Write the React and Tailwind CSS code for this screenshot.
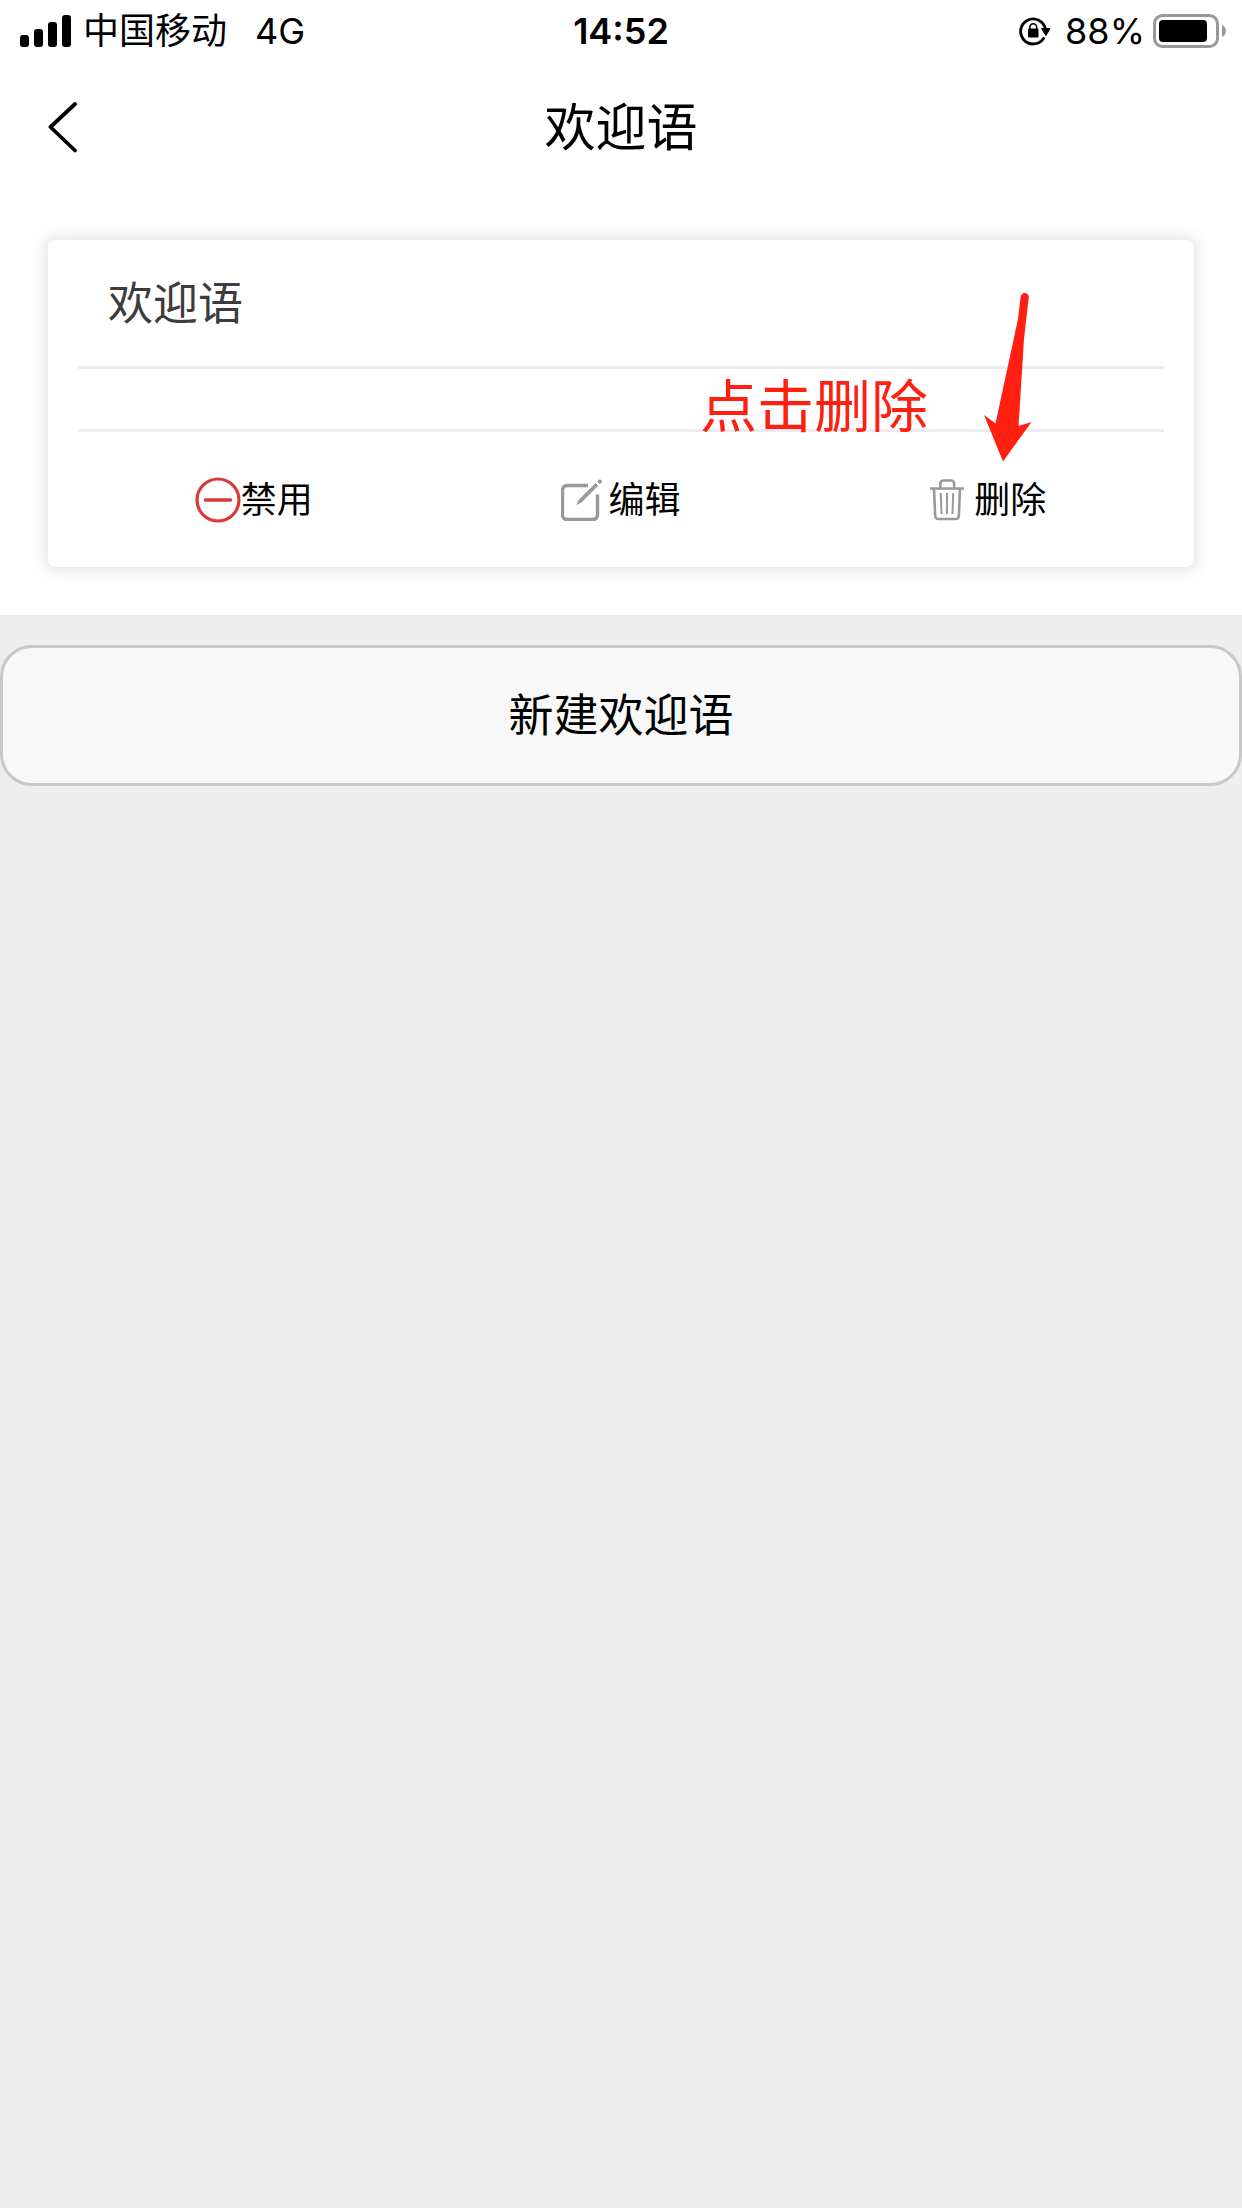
import React from "react";

const actions = [
  { id: "disable", label: "禁用", icon: <DisableIcon />, gap: "gap-0" },
  { id: "edit", label: "编辑", icon: <EditIcon />, gap: "gap-1.5" },
  { id: "delete", label: "删除", icon: <TrashIcon />, gap: "gap-2.5" },
];

function SignalIcon() {
  return (
    <svg width="51" height="32" viewBox="0 0 51 32" aria-hidden="true">
      <rect x="0" y="20" width="9" height="12" rx="3" />
      <rect x="14" y="14" width="9" height="18" rx="3" />
      <rect x="28" y="7" width="9" height="25" rx="3" />
      <rect x="42" y="0" width="9" height="32" rx="3" />
    </svg>
  );
}

function RotationLockIcon() {
  return (
    <svg width="32" height="30" viewBox="0 0 32 30" fill="none" aria-hidden="true">
      <path
        d="M26.400 13A12.500 12.500 0 1 0 24.500 22.500"
        stroke="#000"
        strokeWidth="2.800"
        strokeLinecap="round"
      />
      <path d="M22.500 12.500h8.500l-4 7z" fill="#000" stroke="#000" strokeLinejoin="round" />
      <rect x="9" y="12.500" width="10.500" height="9" rx="1.200" fill="#000" />
      <path d="M10.800 13v-1.800a3.450 3.450 0 0 1 6.900 0V13" stroke="#000" strokeWidth="1.600" />
    </svg>
  );
}

function BatteryIcon() {
  return (
    <svg width="73" height="34" viewBox="0 0 73 34" fill="none" aria-hidden="true">
      <rect x="1.500" y="1.500" width="63" height="31" rx="8" stroke="#999" strokeWidth="3" />
      <rect x="6" y="6" width="48" height="22" rx="4" fill="#000" />
      <path d="M69 11c5.200 1.800 5.200 10.200 0 12z" fill="#999" />
    </svg>
  );
}

function BackIcon() {
  return (
    <svg width="30" height="52" viewBox="0 0 30 52" fill="none" aria-hidden="true">
      <path
        d="M27 3 2.500 26 27 49.500"
        stroke="#000"
        strokeWidth="3.800"
        strokeLinecap="round"
        strokeLinejoin="round"
      />
    </svg>
  );
}

function DisableIcon() {
  return (
    <svg width="46" height="46" viewBox="0 0 46 46" fill="none" stroke="#d93a35" aria-hidden="true">
      <circle cx="23" cy="23" r="21" strokeWidth="3.200" />
      <path d="M10.500 23h25" strokeWidth="3.600" strokeLinecap="round" />
    </svg>
  );
}

function EditIcon() {
  return (
    <svg width="41" height="42" viewBox="0 0 41 42" fill="none" stroke="#999" aria-hidden="true">
      <path
        d="M27 6.500H6a4.500 4.500 0 0 0-4.500 4.500v25A4.500 4.500 0 0 0 6 40.500h26a4.500 4.500 0 0 0 4.500-4.500V15.500"
        strokeWidth="3.400"
      />
      <path
        d="M16 25.500 18 21 34.500 4.500 36.800 6.800 20.500 23Z"
        fill="#999"
        strokeWidth="0.800"
        strokeLinejoin="round"
      />
      <circle cx="38.800" cy="2.600" r="2.100" fill="#999" stroke="none" />
    </svg>
  );
}

function TrashIcon() {
  return (
    <svg width="34" height="42" viewBox="0 0 34 42" fill="none" stroke="#999" aria-hidden="true">
      <path d="M0 9.500h34" strokeWidth="2.600" />
      <path d="M10.200 9V5a3.500 3.500 0 0 1 3.500-3.500h7A3.500 3.500 0 0 1 24.200 5v4" strokeWidth="2.600" />
      <path d="M4 10l1.200 27a3 3 0 0 0 3 3h17.600a3 3 0 0 0 3-3L30 10" strokeWidth="2.600" />
      <path d="M10.800 14l.7 21M17 14v21M23.200 14l-.7 21" strokeWidth="2" />
    </svg>
  );
}

function ArrowMark() {
  return (
    <svg width="48" height="169" viewBox="0 0 48 169" fill="#ff2012" aria-hidden="true">
      <path d="M36.500 4.500C37 1.500 38.500 0 40.500 0c3 0 4.500 2 4.300 4.500L42 28 40 46 34.500 133 47.500 129 19 168.500 0 122 11.500 130.500 34 26Z" />
    </svg>
  );
}

const App = () => {
  return (
    <div className="min-h-screen bg-[#eeeeee] text-black font-['Inter','Noto_Sans_CJK_SC',sans-serif]">
      <div className="bg-white pb-12">
        {/* Status bar */}
        <div className="grid h-[62px] grid-cols-[1fr_auto_1fr] items-center px-4 text-4xl">
          <div className="flex items-center gap-3 pl-1">
            <SignalIcon />
            <span>中国移动</span>
            <span className="ml-4">4G</span>
          </div>
          <span className="font-semibold">14:52</span>
          <div className="flex items-center justify-end gap-2">
            <RotationLockIcon />
            <span className="ml-1.5">88%</span>
            <BatteryIcon />
          </div>
        </div>

        {/* Title bar */}
        <header className="grid h-[130px] grid-cols-[1fr_auto_1fr] items-center px-12">
          <button type="button" aria-label="返回" className="justify-self-start">
            <BackIcon />
          </button>
          <h1 className="text-[51px] leading-none">欢迎语</h1>
        </header>

        {/* Greeting card */}
        <section className="relative mx-12 mt-12 rounded-lg bg-white px-[30px] shadow-[0_0_14px_4px_#e6e6ea]">
          <h2 className="flex h-[126px] items-center px-[30px] text-[45px] leading-none text-[#3c3c3c]">
            欢迎语
          </h2>
          <div className="h-[66px] border-y-3 border-[#ebebf0]"></div>
          <div className="-mx-2 flex h-[135px] items-center">
            {actions.map((action) => (
              <div key={action.id} className="flex flex-1 justify-center">
                <button
                  type="button"
                  className={`flex items-center text-4xl ${action.gap}`}
                >
                  {action.icon}
                  <span>{action.label}</span>
                </button>
              </div>
            ))}
          </div>

          {/* Hint over the delete action */}
          <p className="absolute right-[266px] top-[138px] text-[57px] leading-none text-[#ff2012]">
            点击删除
          </p>
          <div className="absolute right-[162px] top-[53px]">
            <ArrowMark />
          </div>
        </section>
      </div>

      <button
        type="button"
        className="mt-[30px] flex h-[141px] w-full items-center justify-center rounded-[32px] border-3 border-[#c8c8c8] bg-[#f8f8f8] text-[45px]"
      >
        新建欢迎语
      </button>
    </div>
  );
};

export default App;
